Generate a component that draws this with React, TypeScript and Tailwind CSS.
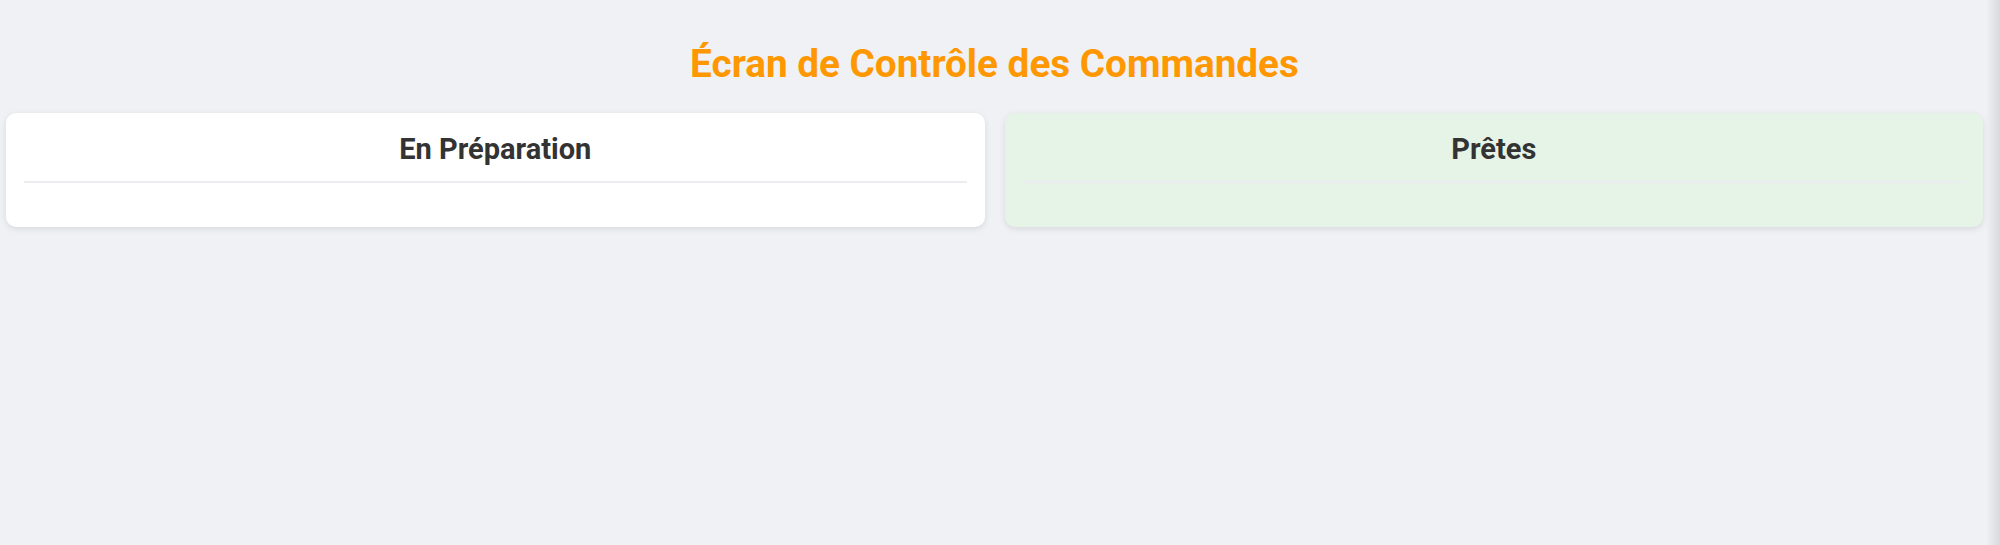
import React from "react";

export default function App() {
  return (
    <div
      className="relative min-h-[545px] w-full bg-[#f0f1f5] overflow-hidden"
      style={{ fontFamily: "Roboto, 'Liberation Sans', sans-serif" }}
    >
      <div className="pl-[6px] pr-[17px]">
        <div className="pt-[40px] mb-[25px] flex justify-center">
          <h1 className="text-[38.7px] leading-[48px] font-bold text-[#ff9800]">
            Écran de Contrôle des Commandes
          </h1>
        </div>
        <div className="grid grid-cols-2 gap-[20px]">
          <div className="rounded-[10px] bg-white shadow-[0_2px_6px_rgba(0,0,0,0.1)] px-[18px] pt-[18px] pb-[18px]">
            <h2 className="text-[29px] leading-[36px] font-bold text-[#333333] text-center pb-[14px] border-b-2 border-[#ececf1]">
              En Préparation
            </h2>
            <div className="h-[26px]" />
          </div>
          <div className="rounded-[10px] bg-[#e6f4e7] shadow-[0_2px_6px_rgba(0,0,0,0.1)] px-[18px] pt-[18px] pb-[18px]">
            <h2 className="text-[29px] leading-[36px] font-bold text-[#333333] text-center pb-[14px] border-b-2 border-[#ecedf1]">
              Prêtes
            </h2>
            <div className="h-[26px]" />
          </div>
        </div>
      </div>
      <div className="absolute right-0 top-0 h-full w-[14px] bg-gradient-to-r from-transparent to-black/10" />
    </div>
  );
}
